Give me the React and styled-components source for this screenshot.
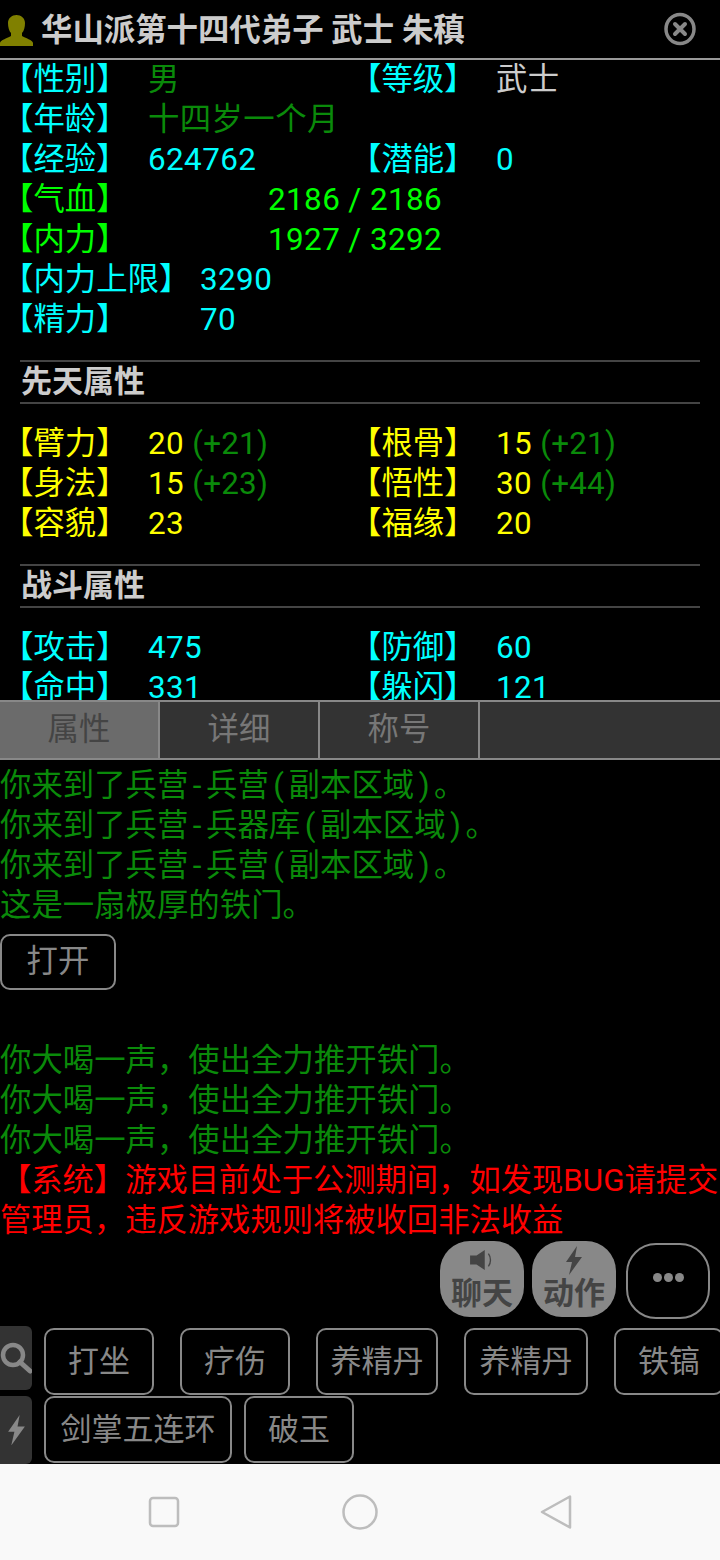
import React from 'react';
import styled, { createGlobalStyle } from 'styled-components';

const GlobalStyle = createGlobalStyle`
html, body {
  margin: 0;
  padding: 0;
  background: #000;
}
* {
  box-sizing: border-box;
}
`;

const Screen = styled.div`
width: 720px;
height: 1560px;
display: flex;
flex-direction: column;
overflow: hidden;
background: #000;
font-family: Roboto, "Noto Sans CJK SC", sans-serif;
font-size: 31.4px;
`;

const Header = styled.header`
height: 60px;
flex: none;
display: flex;
align-items: center;
border-bottom: 2px solid #999;
`;

const HeaderTitle = styled.h1`
flex: 1;
margin: 4px 0 0 8px;
font-size: 31.4px;
font-weight: 700;
line-height: 40px;
color: #ccc;
white-space: nowrap;
`;

const CloseIcon = styled.svg`
width: 32px;
height: 34px;
margin-right: 24px;
flex: none;
`;

const StatsPane = styled.section`
height: 640px;
flex: none;
overflow: hidden;
padding-left: 2px;
`;

const StatRow = styled.div`
height: 40px;
display: flex;
align-items: center;
line-height: 40px;
white-space: nowrap;
`;

const StatLabel = styled.span`
flex: none;
width: ${({ $width }) => $width || 147}px;
color: ${({ $color }) => $color || '#0ff'};
`;

const StatValue = styled.span`
flex: none;
width: ${({ $width }) => ($width ? `${$width}px` : 'auto')};
color: ${({ $color }) => $color || '#0ff'};
letter-spacing: 0.4px;
`;

const Bonus = styled.span`
color: #0a8a0a;
letter-spacing: 0.2px;
`;

const SectionTitle = styled.h2`
margin: 20px 20px 20px 18px;
height: 44px;
border-top: 2px solid #444;
border-bottom: 2px solid #444;
font-size: 31px;
font-weight: 700;
line-height: 40px;
color: #ccc;
padding-left: 1px;
`;

const Tabs = styled.nav`
height: 60px;
flex: none;
display: flex;
background: #333;
border-top: 2px solid #888;
border-bottom: 2px solid #888;
`;

const Tab = styled.div`
width: 160px;
text-align: center;
line-height: 56px;
background: ${({ $active }) => ($active ? '#6b6b6b' : '#333')};
color: ${({ $active }) => ($active ? '#444' : '#777')};
border-right: 2px solid #888;
`;

const LogPane = styled.section`
flex: 1;
min-height: 0;
padding: 6px 0 8px;
display: flex;
flex-direction: column;
`;

const LogLine = styled.div`
line-height: 40px;
height: ${({ $wrap }) => ($wrap ? 'auto' : '40px')};
color: ${({ $color }) => $color || '#0a8a0a'};
font-size: ${({ $wrap }) => ($wrap ? '31.3px' : 'inherit')};
white-space: ${({ $wrap }) => ($wrap ? 'normal' : 'nowrap')};
`;

const Punct = styled.span`
padding: 0 4.5px;
`;

const OpenButton = styled.div`
width: 116px;
height: 56px;
margin: 8px 0 51px;
border: 2px solid #888;
border-radius: 10px;
color: #888;
text-align: center;
line-height: 52px;
`;

const FloatRow = styled.div`
margin-top: auto;
padding-right: 10px;
display: flex;
justify-content: flex-end;
align-items: flex-start;
gap: 8px;
`;

const FloatButton = styled.div`
width: 84px;
height: 76px;
border-radius: 30px;
background: #888;
color: #444;
display: flex;
flex-direction: column;
align-items: center;
font-size: 31px;
font-weight: 700;
line-height: 36px;
padding-top: 3px;
`;

const FloatIcon = styled.div`
height: 32px;
display: flex;
align-items: center;
`;

const MoreButton = styled.div`
width: 84px;
height: 76px;
margin: 2px 0 0 2px;
padding-bottom: 8px;
border-radius: 30px;
border: 2px solid #888;
display: flex;
align-items: center;
justify-content: center;
gap: 2px;
`;

const Dot = styled.span`
width: 9px;
height: 9px;
border-radius: 50%;
background: #888;
`;

const QuickBar = styled.section`
height: 138px;
flex: none;
display: grid;
grid-template-rows: 70px 68px;
grid-template-columns: 32px 1fr;
`;

const SideTab = styled.div`
background: #333;
height: ${({ $height }) => $height}px;
border-radius: 0 6px 6px 0;
display: flex;
align-items: center;
justify-content: center;
`;

const ActionRow = styled.div`
display: flex;
gap: ${({ $gap }) => $gap}px;
padding: ${({ $top }) => $top}px 0 0 12px;
overflow: hidden;
align-items: flex-start;
`;

const ActionButton = styled.div`
flex: none;
width: ${({ $width }) => $width || 110}px;
height: 67px;
border: 2px solid #888;
border-radius: 10px;
color: #888;
font-size: 31px;
line-height: 64px;
text-align: center;
white-space: nowrap;
`;

const NavBar = styled.footer`
height: 96px;
flex: none;
background: #f9f9f9;
display: flex;
align-items: center;
padding: 0 146px;
justify-content: space-between;
`;

const NavIcon = styled.svg`
width: 36px;
height: 36px;
fill: none;
stroke: #bdbdbd;
stroke-width: 2.5;
stroke-linejoin: round;
`;

const UserIcon = () => (
  <svg width="33" height="36" viewBox="0 -3 33 36" style={{ flex: 'none' }}>
    <path fill="#808000" d="M0 32v-3c0-3 8-5 11-7v-3c-2-2-3-6-3-10C8 4 12 1 16.500 1S25 4 25 9c0 4-1 8-3 10v3c3 2 11 4 11 7v3z" />
  </svg>
);

const BoltShape = ({ size, color }) => (
  <svg width={size} height={size * 1.45} viewBox="0 0 20 29">
    <path fill={color} d="M13 0 2 16h6L5 29l13-18h-7z" />
  </svg>
);

const stats = [
  { label: '【性别】', value: '男', valueColor: '#0a8a0a', label2: '【等级】', value2: '武士', value2Color: '#ccc' },
  { label: '【年龄】', value: '十四岁一个月', valueColor: '#0a8a0a' },
  { label: '【经验】', value: '624762', label2: '【潜能】', value2: '0' },
];

const lowerStats = [
  { label: '【气血】', labelColor: '#0f0', width: 266, value: '2186 / 2186', valueColor: '#0f0' },
  { label: '【内力】', labelColor: '#0f0', width: 266, value: '1927 / 3292', valueColor: '#0f0' },
  { label: '【内力上限】', width: 198, value: '3290' },
  { label: '【精力】', width: 198, value: '70' },
];

const innate = [
  { label: '【臂力】', value: '20', bonus: '(+21)', label2: '【根骨】', value2: '15', bonus2: '(+21)' },
  { label: '【身法】', value: '15', bonus: '(+23)', label2: '【悟性】', value2: '30', bonus2: '(+44)' },
  { label: '【容貌】', value: '23', label2: '【福缘】', value2: '20' },
];

const combat = [
  { label: '【攻击】', value: '475', label2: '【防御】', value2: '60' },
  { label: '【命中】', value: '331', label2: '【躲闪】', value2: '121' },
];

const PairRow = ({ row, color }) => (
  <StatRow>
    <StatLabel $width={146} $color={color}>{row.label}</StatLabel>
    <StatValue $width={202} $color={row.valueColor || color}>
      {row.value} {row.bonus && <Bonus>{row.bonus}</Bonus>}
    </StatValue>
    {row.label2 && <StatLabel $width={146} $color={color}>{row.label2}</StatLabel>}
    {row.value2 && (
      <StatValue $color={row.value2Color || color}>
        {row.value2} {row.bonus2 && <Bonus>{row.bonus2}</Bonus>}
      </StatValue>
    )}
  </StatRow>
);

const RoomLine = ({ place }) => (
  <LogLine>你来到了兵营<Punct>-</Punct>{place}<Punct>(</Punct>副本区域<Punct>)</Punct>。</LogLine>
);

export default function App() {
  return (
    <Screen>
      <GlobalStyle />
      <Header>
        <UserIcon />
        <HeaderTitle>华山派第十四代弟子 武士 朱稹</HeaderTitle>
        <CloseIcon viewBox="0 0 32 34">
          <ellipse cx="16" cy="17" rx="14" ry="14.500" fill="none" stroke="#888" strokeWidth="3.500" />
          <path d="M11 12l10 10M21 12 11 22" stroke="#888" strokeWidth="4" strokeLinecap="round" />
        </CloseIcon>
      </Header>

      <StatsPane>
        {stats.map((row) => <PairRow key={row.label} row={row} color="#0ff" />)}
        {lowerStats.map((row) => (
          <StatRow key={row.label}>
            <StatLabel $width={row.width} $color={row.labelColor}>{row.label}</StatLabel>
            <StatValue $color={row.valueColor}>{row.value}</StatValue>
          </StatRow>
        ))}
        <SectionTitle>先天属性</SectionTitle>
        {innate.map((row) => <PairRow key={row.label} row={row} color="#ff0" />)}
        <SectionTitle>战斗属性</SectionTitle>
        {combat.map((row) => <PairRow key={row.label} row={row} color="#0ff" />)}
      </StatsPane>

      <Tabs>
        <Tab $active>属性</Tab>
        <Tab>详细</Tab>
        <Tab>称号</Tab>
      </Tabs>

      <LogPane>
        <RoomLine place="兵营" />
        <RoomLine place="兵器库" />
        <RoomLine place="兵营" />
        <LogLine>这是一扇极厚的铁门。</LogLine>
        <OpenButton>打开</OpenButton>
        <LogLine>你大喝一声，使出全力推开铁门。</LogLine>
        <LogLine>你大喝一声，使出全力推开铁门。</LogLine>
        <LogLine>你大喝一声，使出全力推开铁门。</LogLine>
        <LogLine $wrap $color="#f00">【系统】游戏目前处于公测期间，如发现BUG请提交管理员，违反游戏规则将被收回非法收益</LogLine>
        <FloatRow>
          <FloatButton>
            <FloatIcon>
              <svg width="28" height="22" viewBox="0 0 28 24">
                <path fill="#444" d="M1 7h7l9-6v22l-9-6H1z" />
                <path fill="none" stroke="#444" strokeWidth="1.500" d="M21 5c3 4 3 10 0 14" />
              </svg>
            </FloatIcon>
            聊天
          </FloatButton>
          <FloatButton>
            <FloatIcon>
              <BoltShape size={20} color="#444" />
            </FloatIcon>
            动作
          </FloatButton>
          <MoreButton><Dot /><Dot /><Dot /></MoreButton>
        </FloatRow>
      </LogPane>

      <QuickBar>
        <SideTab $height={64}>
          <svg width="32" height="32" viewBox="0 0 32 32">
            <circle cx="13" cy="13" r="10" fill="none" stroke="#888" strokeWidth="4.500" />
            <path d="M20 20l10 9" stroke="#888" strokeWidth="5" strokeLinecap="round" />
          </svg>
        </SideTab>
        <ActionRow $gap={26} $top={2}>
          <ActionButton>打坐</ActionButton>
          <ActionButton>疗伤</ActionButton>
          <ActionButton $width={122}>养精丹</ActionButton>
          <ActionButton $width={124}>养精丹</ActionButton>
          <ActionButton>铁镐</ActionButton>
        </ActionRow>
        <SideTab $height={68}>
          <BoltShape size={21} color="#888" />
        </SideTab>
        <ActionRow $gap={12} $top={0}>
          <ActionButton $width={188}>剑掌五连环</ActionButton>
          <ActionButton>破玉</ActionButton>
        </ActionRow>
      </QuickBar>

      <NavBar>
        <NavIcon viewBox="0 0 36 36"><rect x="4" y="4" width="28" height="28" rx="3" /></NavIcon>
        <NavIcon viewBox="0 0 36 36"><circle cx="18" cy="18" r="16.500" /></NavIcon>
        <NavIcon viewBox="0 0 36 36"><path d="M4 18 32 2.500v31z" /></NavIcon>
      </NavBar>
    </Screen>
  );
}
